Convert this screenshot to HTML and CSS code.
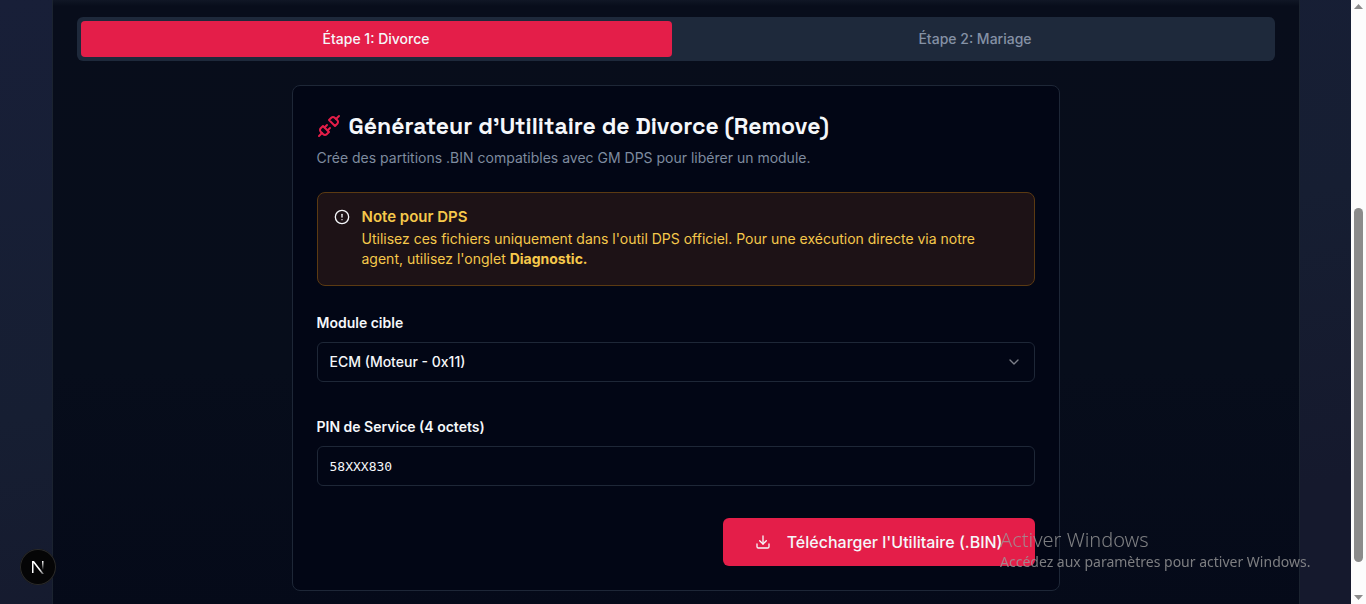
FILE: index.html
```html
<!DOCTYPE html>
<html lang="fr">
<head>
    <meta charset="utf-8">
    <meta name="viewport" content="width=device-width, initial-scale=1">
    <title>Générateur d’Utilitaire</title>
    <link rel="stylesheet" href="styles.css">
</head>
<body>
    <div class="app">
        <main class="panel">
            <div class="tabs" role="tablist">
                <button type="button" class="tab active" role="tab" aria-selected="true">Étape 1: Divorce</button>
                <button type="button" class="tab" role="tab" aria-selected="false">Étape 2: Mariage</button>
            </div>

            <section class="card">
                <h1 class="card-title">
                    <svg class="icon-lg" viewBox="0 0 24 24">
                        <path d="m19 5 3-3"/>
                        <path d="m2 22 3-3"/>
                        <path d="M6.3 20.3a2.4 2.4 0 0 0 3.4 0L12 18l-6-6-2.3 2.3a2.4 2.4 0 0 0 0 3.4Z"/>
                        <path d="M7.5 13.5 10 11"/>
                        <path d="M10.5 16.5 13 14"/>
                        <path d="m12 6 6 6 2.3-2.3a2.4 2.4 0 0 0 0-3.4l-2.6-2.6a2.4 2.4 0 0 0-3.4 0Z"/>
                    </svg>
                    Générateur d’Utilitaire de Divorce (Remove)
                </h1>
                <p class="card-description">Crée des partitions .BIN compatibles avec GM DPS pour libérer un module.</p>

                <div class="alert" role="alert">
                    <svg class="icon" viewBox="0 0 24 24">
                        <circle cx="12" cy="12" r="10"/>
                        <path d="M12 8v4"/>
                        <path d="M12 16h.01"/>
                    </svg>
                    <div>
                        <h2 class="alert-title">Note pour DPS</h2>
                        <p class="alert-text">Utilisez ces fichiers uniquement dans l'outil DPS officiel. Pour une exécution directe via notre agent, utilisez l'onglet <b>Diagnostic.</b></p>
                    </div>
                </div>

                <form class="form">
                    <div class="field">
                        <label for="module">Module cible</label>
                        <div class="select-wrap">
                            <select id="module" class="control">
                                <option>ECM (Moteur - 0x11)</option>
                            </select>
                            <svg class="icon chevron" viewBox="0 0 24 24"><path d="m6 9 6 6 6-6"/></svg>
                        </div>
                    </div>
                    <div class="field">
                        <label for="pin">PIN de Service (4 octets)</label>
                        <input id="pin" class="control mono" type="text" value="58XXX830">
                    </div>
                    <button type="button" class="download">
                        <svg class="icon" viewBox="0 0 24 24">
                            <path d="M21 15v4a2 2 0 0 1-2 2H5a2 2 0 0 1-2-2v-4"/>
                            <path d="m7 10 5 5 5-5"/>
                            <path d="M12 15V3"/>
                        </svg>
                        Télécharger l'Utilitaire (.BIN)
                    </button>
                </form>
            </section>
        </main>
    </div>

    <div class="scrollbar">
        <svg class="arrow" viewBox="0 0 9 5"><path d="M0 5 4.5 0 9 5Z"/></svg>
        <div class="thumb"></div>
        <svg class="arrow" viewBox="0 0 9 5"><path d="M0 0 4.5 5 9 0Z"/></svg>
    </div>

    <button type="button" class="dev-badge" aria-label="Next.js">
        <svg viewBox="0 0 36 36">
            <defs>
                <linearGradient id="n-diag" gradientUnits="userSpaceOnUse" x1="20" y1="20" x2="24" y2="25">
                    <stop offset="0" stop-color="#fff"/>
                    <stop offset="1" stop-color="#fff" stop-opacity="0.3"/>
                </linearGradient>
                <linearGradient id="n-stem" x1="0" y1="0" x2="0" y2="1">
                    <stop offset="0" stop-color="#fff"/>
                    <stop offset="1" stop-color="#fff" stop-opacity="0"/>
                </linearGradient>
            </defs>
            <path d="M12 24V12h2l10 13h-2L13.5 14v10Z" fill="url(#n-diag)"/>
            <rect x="22" y="12" width="1.5" height="9" fill="url(#n-stem)"/>
        </svg>
    </button>

    <div class="watermark">
        <div class="watermark-title">Activer Windows</div>
        <div class="watermark-text">Accédez aux paramètres pour activer Windows.</div>
    </div>
</body>
</html>
```
FILE: styles.css
```css
:root {
    --card-bg: #020615;
    --border: #1e2737;
    --muted: #1e293b;
    --primary: #e41e49;
    --text: #f5f7fa;
    --text-muted: #7e8b9f;
    --warning: #f5c84b;
}

* {
    box-sizing: border-box;
}

body {
    display: flex;
    height: 100vh;
    margin: 0;
    overflow: hidden;
    font-family: Inter, "Liberation Sans", sans-serif;
    font-size: 16px;
    line-height: 24px;
    color: var(--text);
    background: #151b2f;
}

h1, h2, p {
    margin: 0;
}

button, input, select {
    font: inherit;
    color: inherit;
}

svg {
    flex: none;
    fill: none;
    stroke: currentColor;
    stroke-width: 2;
    stroke-linecap: round;
    stroke-linejoin: round;
}

.icon {
    width: 16px;
    height: 16px;
}

.icon-lg {
    width: 24px;
    height: 24px;
    color: var(--primary);
}

.app {
    flex: 1;
    min-width: 0;
    padding: 0 16px;
    background: linear-gradient(170deg, #181f38 0%, #161e32 50%, #15192d 85%);
}

.panel {
    max-width: 1248px;
    min-height: 100%;
    margin: 0 auto;
    padding: 17px 24px 24px;
    border: solid #1b2330;
    border-width: 0 1px;
    background: linear-gradient(#101625 0, #080d1b 6px, #070d1b 60%, #050a19 100%);
}

.tabs {
    display: grid;
    grid-template-columns: 1fr 1fr;
    gap: 8px;
    padding: 4px;
    margin-bottom: 24px;
    border-radius: 6px;
    background: var(--muted);
}

.tab {
    height: 36px;
    padding: 0 12px;
    border: 0;
    border-radius: 4px;
    font-size: 14px;
    font-weight: 500;
    color: #8591a5;
    background: transparent;
    cursor: pointer;
}

.tab.active {
    color: var(--text);
    background: var(--primary);
}

.card {
    max-width: 768px;
    margin: 0 auto;
    padding: 24px;
    border: 1px solid var(--border);
    border-radius: 8px;
    background: var(--card-bg);
}

.card-title {
    display: flex;
    align-items: center;
    gap: 8px;
    font-family: "Space Grotesk", Inter, sans-serif;
    font-size: 23px;
    font-weight: 600;
    line-height: 32px;
}

.card-description {
    margin: 6px 0 24px;
    font-size: 14px;
    line-height: 20px;
    color: var(--text-muted);
}

.alert {
    display: flex;
    gap: 12px;
    padding: 16px;
    margin-bottom: 24px;
    border: 1px solid #5b3a12;
    border-radius: 8px;
    background: #1d1216;
}

.alert-title {
    margin-bottom: 4px;
    font-size: 15px;
    font-weight: 600;
    line-height: 16px;
    color: var(--warning);
}

.alert-text {
    font-size: 14px;
    line-height: 20px;
    color: var(--warning);
}

.form {
    display: flex;
    flex-direction: column;
    gap: 32px;
}

.field {
    display: flex;
    flex-direction: column;
    gap: 6px;
}

.field label {
    font-size: 14px;
    font-weight: 600;
    line-height: 26px;
}

.select-wrap {
    position: relative;
}

.control {
    display: block;
    width: 100%;
    height: 40px;
    padding: 0 12px;
    border: 1px solid var(--border);
    border-radius: 6px;
    font-size: 14px;
    font-weight: 500;
    background: var(--card-bg);
    appearance: none;
}

.control.mono {
    font-family: "DejaVu Sans Mono", monospace;
    font-size: 13px;
}

.chevron {
    position: absolute;
    top: 12px;
    right: 13px;
    opacity: 0.5;
    pointer-events: none;
}

.download {
    display: flex;
    align-items: center;
    align-self: flex-end;
    gap: 16px;
    height: 48px;
    padding: 0 32px;
    border: 0;
    border-radius: 6px;
    font-weight: 500;
    background: var(--primary);
    cursor: pointer;
}

/* page scrollbar */
.scrollbar {
    display: flex;
    flex-direction: column;
    align-items: center;
    justify-content: space-between;
    width: 15px;
    padding: 4px 0;
    background: #fcfcfc;
}

.arrow {
    width: 9px;
    height: 5px;
    fill: #8b8b8b;
    stroke: none;
}

.thumb {
    width: 9px;
    height: 354px;
    margin-top: 166px;
    border-radius: 5px;
    background: #8b8b8b;
}

.dev-badge {
    position: fixed;
    left: 20px;
    bottom: 19px;
    width: 36px;
    height: 36px;
    padding: 0;
    border: 0;
    border-radius: 50%;
    background: #050506;
    box-shadow: inset 0 0 0 1px #2a2a2a;
}

.dev-badge svg {
    display: block;
    stroke: none;
}

.watermark {
    position: fixed;
    right: 52px;
    bottom: 32px;
    width: 314px;
    font-family: "Noto Sans", "Open Sans", sans-serif;
    white-space: nowrap;
    color: rgba(155, 155, 155, 0.8);
    pointer-events: none;
}

.watermark-title {
    font-size: 20px;
    font-weight: 300;
}

.watermark-text {
    font-size: 14px;
    line-height: 20px;
}
```
